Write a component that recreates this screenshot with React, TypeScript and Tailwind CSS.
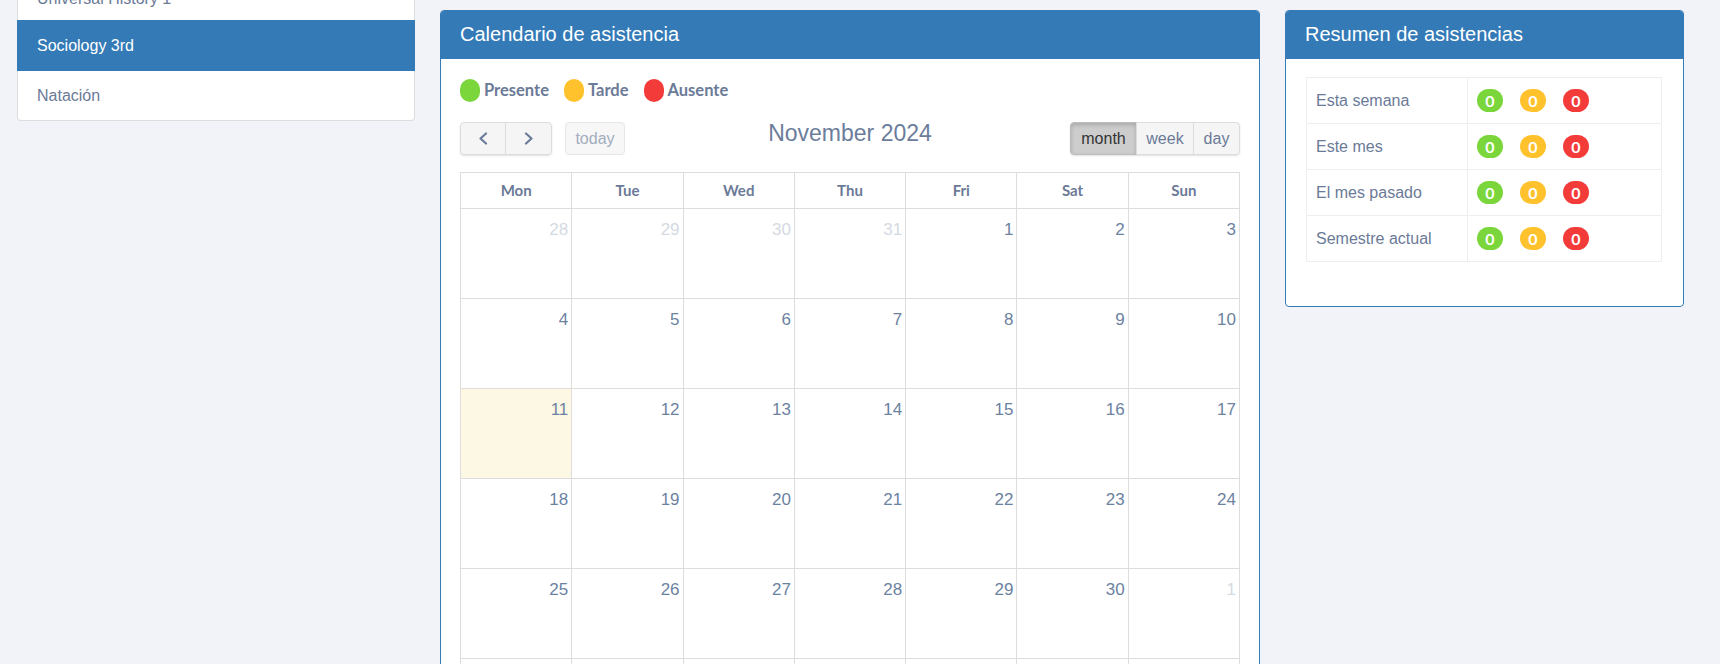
import React from "react";

type Day = { n: number; muted: boolean; today?: boolean };

const weekdays = ["Mon", "Tue", "Wed", "Thu", "Fri", "Sat", "Sun"];

function buildMonth(): Day[] {
  const days: Day[] = [];
  for (const n of [28, 29, 30, 31]) days.push({ n, muted: true });
  for (let n = 1; n <= 30; n++) days.push({ n, muted: false, today: n === 11 });
  for (let n = 1; n <= 8; n++) days.push({ n, muted: true });
  return days;
}

const summaryRows = ["Esta semana", "Este mes", "El mes pasado", "Semestre actual"];

function Chevron({ dir }: { dir: "left" | "right" }) {
  return (
    <svg width="10" height="13" viewBox="0 0 10 13" fill="none">
      <polyline
        points={dir === "left" ? "8,1.5 2.5,6.5 8,11.5" : "2,1.5 7.5,6.5 2,11.5"}
        stroke="#6b7c9b"
        strokeWidth="2.2"
        strokeLinecap="round"
        strokeLinejoin="round"
      />
    </svg>
  );
}

function PanelHeader({ title }: { title: string }) {
  return (
    <div className="flex h-[48px] items-center bg-[#337ab7] px-[19px] pb-[2px] text-[20px] text-white">
      {title}
    </div>
  );
}

function LegendDot({ color, label }: { color: string; label: string }) {
  return (
    <div className="mr-[15px] flex items-center">
      <span className={`h-[23px] w-[20px] rounded-full ${color}`} />
      <span className="ml-[4px] font-['Lato',sans-serif] text-[16.5px] font-bold text-[#6b7a97]">{label}</span>
    </div>
  );
}

function Badge({ color }: { color: string }) {
  return (
    <span
      className={`flex h-[23px] w-[26px] items-center justify-center rounded-full font-['Lato',sans-serif] text-[16px] font-bold leading-none text-white ${color}`}
    >
      0
    </span>
  );
}

export default function App() {
  const days = buildMonth();

  return (
    <div className="h-[664px] overflow-hidden bg-[#f2f3f8] font-['Liberation_Sans',Arial,sans-serif]">
      <div className="flex items-start gap-[25px] pl-[17px] pt-[10px]">
        {/* course list, scrolled partly out of view */}
        <div className="-mt-[41px] w-[398px]">
          <div className="flex h-[51px] items-center rounded-t-[4px] border-x border-t border-[#ddd] bg-white pl-[19px] pt-[7px] text-[16px] text-[#6b7a97]">
            Universal History 1
          </div>
          <div className="flex h-[51px] items-center bg-[#337ab7] pl-[20px] text-[16px] text-white">
            Sociology 3rd
          </div>
          <div className="flex h-[50px] items-center rounded-b-[4px] border-x border-b border-[#ddd] bg-white pl-[19px] text-[16px] text-[#6b7a97]">
            Natación
          </div>
        </div>

        {/* attendance calendar */}
        <div className="w-[820px] overflow-hidden rounded-[4px] border border-[#337ab7] bg-white">
          <PanelHeader title="Calendario de asistencia" />
          <div className="px-[19px] pt-[20px]">
            <div className="flex h-[23px] items-center">
              <LegendDot color="bg-[#7ad63b]" label="Presente" />
              <LegendDot color="bg-[#ffc22d]" label="Tarde" />
              <LegendDot color="bg-[#f33c3a]" label="Ausente" />
            </div>

            <div className="mt-[20px] flex items-start">
              <div className="flex flex-1 items-center">
                <div className="flex h-[33px] rounded-[4px] shadow-[0_1px_2px_rgba(0,0,0,0.12)]">
                  <button className="flex w-[46px] items-center justify-center rounded-l-[4px] border border-[#dcdcdc] bg-[#f5f5f5]">
                    <Chevron dir="left" />
                  </button>
                  <button className="-ml-px flex w-[47px] items-center justify-center rounded-r-[4px] border border-[#dcdcdc] bg-[#f5f5f5]">
                    <Chevron dir="right" />
                  </button>
                </div>
                <button className="ml-[13px] h-[33px] w-[60px] rounded-[4px] border border-[#e6e6e6] bg-[#f7f7f7] text-[16px] text-[#a3adbd]">
                  today
                </button>
              </div>
              <h2 className="text-[23px] leading-[23px] text-[#6b7d9b]">November 2024</h2>
              <div className="flex flex-1 justify-end">
                <div className="flex h-[33px] rounded-[4px] shadow-[0_1px_2px_rgba(0,0,0,0.12)]">
                  <button className="w-[67px] rounded-l-[4px] border border-[#bdbdbd] bg-[#cdcdcd] text-[16px] text-[#333] shadow-[inset_0_2px_4px_rgba(0,0,0,0.18)]">
                    month
                  </button>
                  <button className="-ml-px w-[58px] border border-[#dcdcdc] bg-[#f5f5f5] text-[16px] text-[#6b7a97]">
                    week
                  </button>
                  <button className="-ml-px w-[47px] rounded-r-[4px] border border-[#dcdcdc] bg-[#f5f5f5] text-[16px] text-[#6b7a97]">
                    day
                  </button>
                </div>
              </div>
            </div>

            <div className="mt-[17px] grid grid-cols-7 border-l border-t border-[#ddd]">
              {weekdays.map((d) => (
                <div
                  key={d}
                  className="flex h-[36px] items-center justify-center border-b border-r border-[#ddd] font-['Lato',sans-serif] text-[15px] font-bold text-[#6b7a97]"
                >
                  {d}
                </div>
              ))}
              {days.map((d, i) => (
                <div
                  key={i}
                  className={`h-[90px] border-b border-r border-[#ddd] pr-[3px] pt-[11px] text-right text-[17px] leading-[20px] ${
                    d.today ? "bg-[#fcf8e3]" : "bg-white"
                  } ${d.muted ? "text-[#d4dae3]" : "text-[#6c82a1]"}`}
                >
                  {d.n}
                </div>
              ))}
            </div>
          </div>
        </div>

        {/* attendance summary */}
        <div className="w-[399px] overflow-hidden rounded-[4px] border border-[#337ab7] bg-white">
          <PanelHeader title="Resumen de asistencias" />
          <div className="pb-[44px] pl-[20px] pt-[18px]">
            <div className="w-[356px] border border-[#eee]">
              {summaryRows.map((label, i) => (
                <div key={label} className={`flex ${i > 0 ? "h-[46px] border-t border-[#eee]" : "h-[45px]"}`}>
                  <div className="flex w-[161px] items-center border-r border-[#eee] pl-[9px] text-[16px] text-[#6b7a97]">
                    {label}
                  </div>
                  <div className="flex flex-1 items-center gap-[17px] pl-[9px]">
                    <Badge color="bg-[#7ad63b]" />
                    <Badge color="bg-[#ffc22d]" />
                    <Badge color="bg-[#f33c3a]" />
                  </div>
                </div>
              ))}
            </div>
          </div>
        </div>
      </div>
    </div>
  );
}
